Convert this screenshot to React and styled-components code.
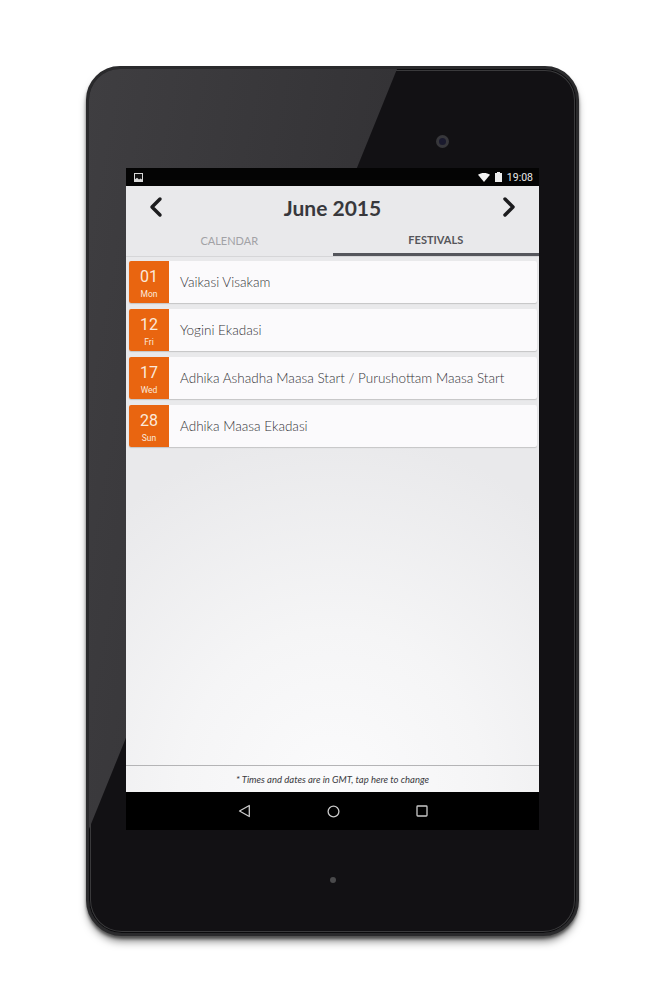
import React from "react";
import styled, { createGlobalStyle } from "styled-components";
import { ChevronLeft, ChevronRight } from "lucide-react";

const Global = createGlobalStyle`
  html, body { margin: 0; padding: 0; background: #fff; }
  body { width: 666px; height: 1000px; overflow: hidden; font-family: "Lato", "Liberation Sans", sans-serif; }
`;

const Stage = styled.div`
  width: 666px;
  height: 1000px;
  padding: 66px 87px 0 86px;
  box-sizing: border-box;
`;

const Tablet = styled.div`
  position: relative;
  width: 493px;
  height: 870px;
  box-sizing: border-box;
  display: flex;
  flex-direction: column;
  border-radius: 34px 34px 36px 36px;
  background: #121114;
  border: 3px solid #2a2a2c;
  box-shadow: inset 0 0 0 1px #0b0b0d, inset 0 0 0 2px #3a3a3c, 0 7px 9px -2px rgba(0,0,0,.5), 0 3px 3px rgba(0,0,0,.45);
  overflow: hidden;

  &::before {
    content: "";
    position: absolute;
    inset: 0;
    background: linear-gradient(100deg, #3f3e41 0%, #2f2e31 70%, #27262a 100%);
    clip-path: polygon(0 0, 308px 0, 0px 760px);
  }
`;

const TopBezel = styled.div`
  position: relative;
  height: 99px;
  display: flex;
  align-items: flex-start;
  padding: 66px 0 0 347px;
  box-sizing: border-box;
`;

const Camera = styled.div`
  width: 13px;
  height: 13px;
  border-radius: 50%;
  box-sizing: border-box;
  border: 3px solid #37373b;
  background: #1a1a2e;
`;

const Screen = styled.div`
  position: relative;
  margin: 0 37px;
  width: 413px;
  height: 662px;
  display: flex;
  flex-direction: column;
  background: #000;
`;

const StatusBar = styled.div`
  height: 18px;
  flex: none;
  display: flex;
  align-items: center;
  justify-content: space-between;
  padding: 0 6px 0 8px;
  background: #040404;
  color: #e8e8e8;
  font-family: "Roboto", sans-serif;
  font-size: 10.5px;
`;

const StatusRight = styled.div`
  display: flex;
  align-items: center;
  gap: 5px;
`;

const App = styled.div`
  flex: 1;
  min-height: 0;
  display: flex;
  flex-direction: column;
  background: radial-gradient(ellipse 340px 360px at 50% 100%, #fbfbfc 0%, #f5f5f6 45%, #e9e9eb 100%);
`;

const Header = styled.div`
  height: 42px;
  flex: none;
  display: flex;
  align-items: center;
  justify-content: space-between;
  padding: 0 14px;
  color: #1c1c1e;
`;

const Title = styled.div`
  font-size: 21px;
  font-weight: 700;
  color: #38383c;
`;

const Tabs = styled.div`
  display: flex;
  height: 28px;
  flex: none;
  border-bottom: 1px solid #d6d6d8;
`;

const Tab = styled.div`
  flex: 1;
  display: flex;
  align-items: center;
  justify-content: center;
  padding-bottom: 3px;
  box-sizing: border-box;
  height: ${(p) => (p.$active ? "28px" : "27px")};
  font-size: 11px;
  font-weight: ${(p) => (p.$active ? 700 : 400)};
  color: ${(p) => (p.$active ? "#55555a" : "#a2a2a6")};
  border-bottom: ${(p) => (p.$active ? "3px solid #55565c" : "none")};
`;

const List = styled.div`
  flex: 1;
  min-height: 0;
  display: flex;
  flex-direction: column;
  gap: 6px;
  padding: 4px 2px 0 3px;
`;

const Card = styled.div`
  height: 42px;
  display: flex;
  border-radius: 2px;
  background: #fbfafc;
  box-shadow: 0 1px 1px rgba(0,0,0,.16);
`;

const DateBox = styled.div`
  width: 40px;
  flex: none;
  display: flex;
  flex-direction: column;
  align-items: center;
  border-radius: 2px 0 0 2px;
  background: #e96510;
  color: #fbe9dc;
`;

const Day = styled.div`
  font-family: "Roboto", sans-serif;
  font-size: 16px;
  line-height: 18px;
  margin-top: 7px;
`;

const Weekday = styled.div`
  font-family: "Roboto", sans-serif;
  font-size: 8.5px;
  line-height: 11px;
  margin-top: 3px;
`;

const Label = styled.div`
  display: flex;
  align-items: center;
  padding-left: 11px;
  font-size: 13.5px;
  font-weight: 300;
  color: #333337;
`;

const Footer = styled.div`
  height: 26px;
  flex: none;
  display: flex;
  align-items: center;
  justify-content: center;
  border-top: 1px solid #b4b4b6;
  font-size: 9.5px;
  font-style: italic;
  color: #3a3a3e;
`;

const NavBar = styled.div`
  height: 38px;
  flex: none;
  display: flex;
  align-items: center;
  justify-content: center;
  gap: 76px;
  background: #000;
`;

const BottomBezel = styled.div`
  position: relative;
  flex: 1;
  display: flex;
  justify-content: center;
  padding-top: 47px;
  box-sizing: border-box;
`;

const Sensor = styled.div`
  width: 6px;
  height: 6px;
  border-radius: 50%;
  background: #4a4a4c;
  filter: blur(.6px);
`;

const Back = () => (
  <svg width="13" height="14" viewBox="0 0 13 14" fill="none" stroke="#c9c9c9" strokeWidth="1.3" strokeLinejoin="round">
    <path d="M11.3 1.5V12.5L1.5 7Z" />
  </svg>
);
const Home = () => (
  <svg width="13" height="13" viewBox="0 0 13 13" fill="none" stroke="#c9c9c9" strokeWidth="1.3">
    <circle cx="6.5" cy="6.5" r="5.4" />
  </svg>
);
const Recent = () => (
  <svg width="12" height="12" viewBox="0 0 12 12" fill="none" stroke="#c9c9c9" strokeWidth="1.3">
    <rect x="1" y="1" width="10" height="10" rx="0.8" />
  </svg>
);
const PictureIcon = () => (
  <svg width="9" height="9" viewBox="0 0 9 9">
    <rect x=".5" y=".5" width="8" height="8" fill="#111" stroke="#d8d8d8" />
    <path d="M1 8V6.2L3 4.8L5 6.4L6.5 5.6L8 6.6V8Z" fill="#d8d8d8" />
  </svg>
);
const Wifi = () => (
  <svg width="12" height="9" viewBox="0 0 12 9">
    <path d="M0 1.8C3.4-.6 8.6-.6 12 1.8L6 9Z" fill="#f2f2f2" />
  </svg>
);
const Battery = () => (
  <svg width="7" height="10" viewBox="0 0 7 10">
    <path d="M2 0H5V1H7V10H0V1H2Z" fill="#ececec" />
  </svg>
);

const festivals = [
  ["01", "Mon", "Vaikasi Visakam"],
  ["12", "Fri", "Yogini Ekadasi"],
  ["17", "Wed", "Adhika Ashadha Maasa Start / Purushottam Maasa Start"],
  ["28", "Sun", "Adhika Maasa Ekadasi"],
];

export default function Page() {
  return (
    <Stage>
      <Global />
      <Tablet>
        <TopBezel>
          <Camera />
        </TopBezel>
        <Screen>
          <StatusBar>
            <PictureIcon />
            <StatusRight>
              <Wifi />
              <Battery />
              <span>19:08</span>
            </StatusRight>
          </StatusBar>
          <App>
            <Header>
              <ChevronLeft size={32} strokeWidth={2.6} />
              <Title>June 2015</Title>
              <ChevronRight size={32} strokeWidth={2.6} />
            </Header>
            <Tabs>
              <Tab>CALENDAR</Tab>
              <Tab $active>FESTIVALS</Tab>
            </Tabs>
            <List>
              {festivals.map(([d, w, t]) => (
                <Card key={d}>
                  <DateBox>
                    <Day>{d}</Day>
                    <Weekday>{w}</Weekday>
                  </DateBox>
                  <Label>{t}</Label>
                </Card>
              ))}
            </List>
            <Footer>* Times and dates are in GMT, tap here to change</Footer>
          </App>
          <NavBar>
            <Back />
            <Home />
            <Recent />
          </NavBar>
        </Screen>
        <BottomBezel>
          <Sensor />
        </BottomBezel>
      </Tablet>
    </Stage>
  );
}
